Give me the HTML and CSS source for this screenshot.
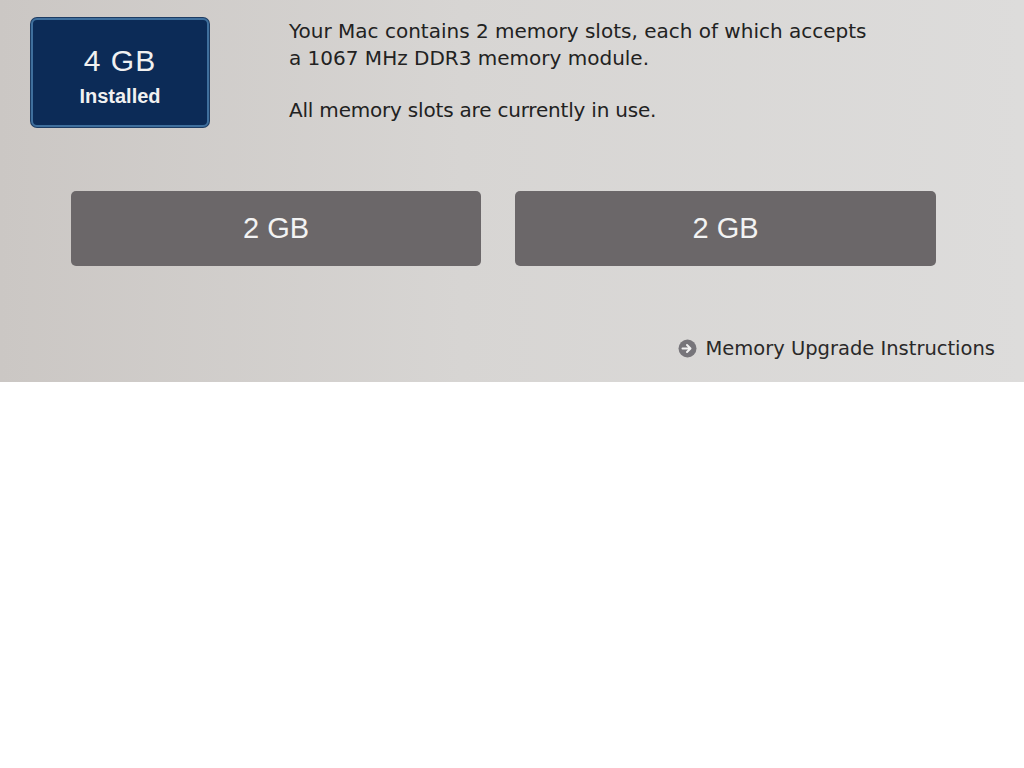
FILE: index.html
```html
<!DOCTYPE html>
<html lang="en">
<head>
    <meta charset="UTF-8">
    <title>Memory</title>
    <link rel="stylesheet" href="styles.css">
</head>
<body>
    <div class="panel">
        <div class="top">
            <div class="badge">
                <div class="badge-size">4 GB</div>
                <div class="badge-label">Installed</div>
            </div>
            <div class="info">
                <p>Your Mac contains 2 memory slots, each of which accepts<br>a 1067 MHz DDR3 memory module.</p>
                <p class="status">All memory slots are currently in use.</p>
            </div>
        </div>

        <div class="slots">
            <div class="slot slot-left">2 GB</div>
            <div class="slot slot-right">2 GB</div>
        </div>

        <div class="links">
            <a class="upgrade" href="#">
                <svg class="arrow" width="19" height="19" viewBox="0 0 19 19">
                    <circle cx="9.5" cy="9.5" r="9" fill="#77757a"/>
                    <path d="M4.5 9.5h7M9 6l3.5 3.5L9 13" stroke="#f2f2f2" stroke-width="2" fill="none" stroke-linecap="round" stroke-linejoin="round"/>
                </svg>
                Memory Upgrade Instructions
            </a>
        </div>
    </div>
</body>
</html>
```

FILE: styles.css
```css
body {
    margin: 0;
    background: #fff;
    font-family: "DejaVu Sans", sans-serif;
}
.panel {
    height: 382px;
    background: linear-gradient(90deg, #cbc7c4 0%, #d7d5d3 45%, #dddcdb 100%);
    overflow: hidden;
}
.top {
    display: flex;
    padding: 18px 0 0 31px;
}
.badge {
    width: 174px;
    height: 105px;
    background: #0c2b57;
    border: 2px solid #3f6f9d;
    border-radius: 6px;
    box-shadow: 0 0 0 1px #1d3c63;
    color: #f1f1f1;
    font-family: "Liberation Sans", Arial, sans-serif;
    text-align: center;
}
.badge-size {
    font-size: 30px;
    margin-top: 24px;
    letter-spacing: 1px;
}
.badge-label {
    font-size: 20px;
    font-weight: bold;
    margin-top: 7px;
}
.info {
    margin-left: 80px;
    color: #222;
    font-size: 20px;
    line-height: 27px;
}
.info p {
    margin: 0;
}
.info .status {
    margin-top: 25px;
    letter-spacing: -0.2px;
}
.slots {
    display: flex;
    gap: 34px;
    padding: 64px 0 0 71px;
}
.slot {
    height: 75px;
    background: #6b6769;
    border-radius: 5px;
    color: #f3f3f3;
    font-family: "Liberation Sans", Arial, sans-serif;
    font-size: 29px;
    line-height: 75px;
    text-align: center;
}
.slot-left {
    width: 410px;
}
.slot-right {
    width: 421px;
}
.links {
    display: flex;
    justify-content: flex-end;
    padding: 71px 29px 0 0;
}
.upgrade {
    display: flex;
    align-items: center;
    gap: 8px;
    color: #2a2929;
    font-size: 19.5px;
    text-decoration: none;
}
```
